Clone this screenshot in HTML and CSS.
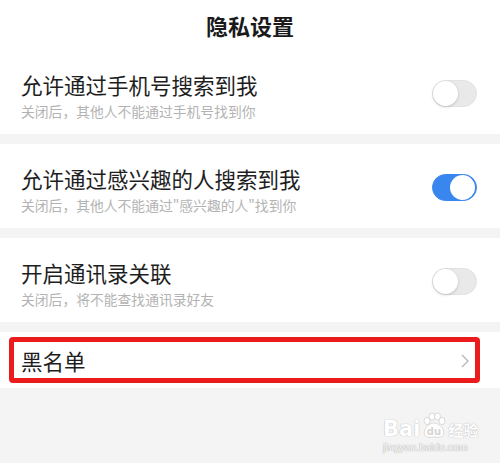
FILE: index.html
```html
<!DOCTYPE html>
<html lang="zh">
<head>
<meta charset="utf-8">
<link rel="stylesheet" href="styles.css">
</head>
<body>
<div class="page">
  <section class="card">
    <header class="header">隐私设置</header>
    <div class="row">
      <div class="texts">
        <div class="title">允许通过手机号搜索到我</div>
        <div class="sub">关闭后，其他人不能通过手机号找到你</div>
      </div>
      <span class="toggle"><span class="knob"></span></span>
    </div>
  </section>
  <section class="card">
    <div class="row">
      <div class="texts">
        <div class="title">允许通过感兴趣的人搜索到我</div>
        <div class="sub">关闭后，其他人不能通过"感兴趣的人"找到你</div>
      </div>
      <span class="toggle on"><span class="knob"></span></span>
    </div>
  </section>
  <section class="card">
    <div class="row">
      <div class="texts">
        <div class="title">开启通讯录关联</div>
        <div class="sub">关闭后，将不能查找通讯录好友</div>
      </div>
      <span class="toggle"><span class="knob"></span></span>
    </div>
  </section>
  <section class="card">
    <div class="row link">
      <div class="title">黑名单</div>
      <svg class="chev" width="10" height="14" viewBox="0 0 10 14"><polyline points="2,1 8,7 2,13" fill="none" stroke="#b8b8b8" stroke-width="1.4"/></svg>
      <span class="mark"></span>
    </div>
  </section>
  <div class="watermark">
    <div class="wm-top">
      <span class="wm-bai">Bai</span>
      <span class="wm-paw">
        <svg width="28" height="28" viewBox="0 0 28 28">
          <g fill="#fff" stroke="#d0d0d0" stroke-width="0.8">
            <ellipse cx="7" cy="9" rx="3" ry="3.6"/>
            <ellipse cx="12" cy="4.5" rx="3" ry="3.6"/>
            <ellipse cx="17.5" cy="4.5" rx="3" ry="3.6"/>
            <ellipse cx="22" cy="9" rx="3" ry="3.6"/>
            <path d="M14 11 C8 11 3 18 4.5 22.5 C6 26.5 11 25 14 25 C17 25 22 26.5 23.5 22.5 C25 18 20 11 14 11 Z"/>
          </g>
          <text x="14" y="23" text-anchor="middle" class="wm-du">du</text>
        </svg>
      </span>
      <span class="wm-jy">经验</span>
    </div>
    <div class="wm-url">jingyan.baidu.com</div>
  </div>
</div>
</body>
</html>
```
FILE: styles.css
```css
html, body {
  margin: 0;
  padding: 0;
}
body {
  background: #f4f4f4;
  font-family: "Noto Sans CJK SC", "Noto Sans", sans-serif;
  width: 500px;
  height: 463px;
  overflow: hidden;
}
.page {
  position: relative;
  width: 500px;
  height: 463px;
  display: flex;
  flex-direction: column;
  gap: 10px;
}
.card {
  background: #fff;
}
.header {
  height: 50px;
  line-height: 50px;
  text-align: center;
  font-size: 22px;
  font-weight: 700;
  color: #1a1a1a;
}
.row {
  position: relative;
  display: flex;
  align-items: center;
  justify-content: space-between;
  padding: 20px 23px 12px 21px;
}
.texts {
  display: flex;
  flex-direction: column;
}
.title {
  font-size: 21.5px;
  line-height: 30px;
  color: #1e1e1e;
}
.sub {
  font-size: 13.8px;
  line-height: 22px;
  color: #b3b3b3;
}
.toggle {
  position: relative;
  width: 45px;
  height: 27px;
  border-radius: 14px;
  background: #e9e9e9;
  box-sizing: border-box;
  border: 1px solid #e2e2e2;
  margin-top: -6px;
}
.knob {
  position: absolute;
  top: 0;
  left: 0;
  width: 25px;
  height: 25px;
  border-radius: 50%;
  background: #fff;
  box-shadow: 0 1px 3px rgba(0,0,0,0.18);
}
.toggle.on {
  background: #3a86ef;
  border-color: #3a86ef;
}
.toggle.on .knob {
  left: auto;
  right: 1px;
  box-shadow: none;
}
.row.link {
  height: 56px;
  box-sizing: border-box;
  padding: 2px 30px 0 21px;
}
.chev {
  display: block;
}
.mark {
  position: absolute;
  left: 9px;
  top: 5px;
  width: 471px;
  height: 46px;
  box-sizing: border-box;
  border: 5px solid #ec1c1c;
  border-radius: 4px;
}
.watermark {
  position: absolute;
  left: 383px;
  top: 410px;
  width: 100px;
  color: #fff;
}
.wm-top {
  display: flex;
  align-items: flex-end;
  height: 30px;
}
.wm-bai {
  font-family: "DejaVu Sans", sans-serif;
  font-size: 21px;
  font-weight: 700;
  line-height: 22px;
  color: #fff;
  text-shadow: 0 0 1px #bdbdbd, 0 0 1px #bdbdbd;
}
.wm-paw svg {
  display: block;
}
.wm-du {
  font-family: "DejaVu Sans", sans-serif;
  font-size: 10px;
  font-weight: 700;
  fill: #d6d6d6;
}
.wm-jy {
  font-size: 15px;
  font-weight: 700;
  line-height: 20px;
  color: #fff;
  text-shadow: 0 0 1px #bdbdbd, 0 0 1px #bdbdbd;
}
.wm-url {
  font-family: "Liberation Sans", sans-serif;
  font-size: 10.5px;
  line-height: 12px;
  margin-top: 1px;
  color: #fdfdfd;
  text-shadow: 0 0 1px #a8a8a8, 0 0 1px #a8a8a8;
}
```
